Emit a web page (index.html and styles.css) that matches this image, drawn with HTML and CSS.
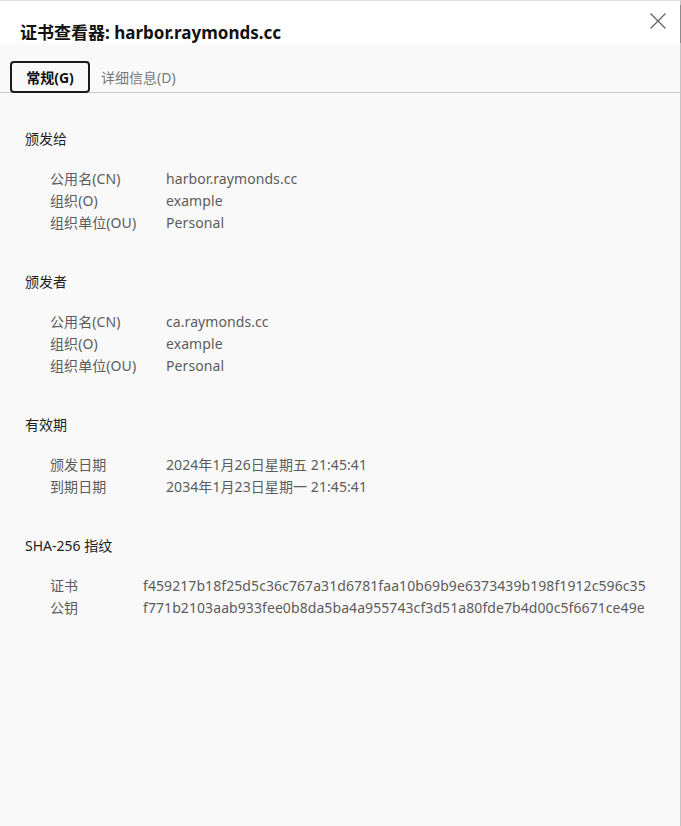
FILE: index.html
```html
<!DOCTYPE html>
<html lang="zh-CN">
<head>
  <meta charset="UTF-8">
  <meta name="viewport" content="width=device-width, initial-scale=1.0">
  <title>证书查看器</title>
  <link rel="stylesheet" href="styles.css">
</head>
<body>
  <div class="dialog">
    <div class="scroll-thumb"></div>

    <div class="header">
      <h1 class="title">证书查看器: harbor.raymonds.cc</h1>
      <button class="close-button" title="关闭">
        <svg width="16" height="16" viewBox="0 0 16 16">
          <path d="M0.5 0.5 L15.5 15.5 M15.5 0.5 L0.5 15.5" stroke="#5f5f5f" stroke-width="1.2" fill="none"/>
        </svg>
      </button>
    </div>

    <div class="tabs">
      <button class="tab active">常规(G)</button>
      <button class="tab">详细信息(D)</button>
    </div>

    <div class="content">
      <div class="section">
        <h2>颁发给</h2>
        <dl class="fields">
          <dt>公用名(CN)</dt><dd>harbor.raymonds.cc</dd>
          <dt>组织(O)</dt><dd>example</dd>
          <dt>组织单位(OU)</dt><dd>Personal</dd>
        </dl>
      </div>

      <div class="section">
        <h2>颁发者</h2>
        <dl class="fields">
          <dt>公用名(CN)</dt><dd>ca.raymonds.cc</dd>
          <dt>组织(O)</dt><dd>example</dd>
          <dt>组织单位(OU)</dt><dd>Personal</dd>
        </dl>
      </div>

      <div class="section">
        <h2>有效期</h2>
        <dl class="fields">
          <dt>颁发日期</dt><dd>2024年1月26日星期五 21:45:41</dd>
          <dt>到期日期</dt><dd>2034年1月23日星期一 21:45:41</dd>
        </dl>
      </div>

      <div class="section">
        <h2>SHA-256 指纹</h2>
        <dl class="fields narrow">
          <dt>证书</dt><dd>f459217b18f25d5c36c767a31d6781faa10b69b9e6373439b198f1912c596c35</dd>
          <dt>公钥</dt><dd>f771b2103aab933fee0b8da5ba4a955743cf3d51a80fde7b4d00c5f6671ce49e</dd>
        </dl>
      </div>
    </div>
  </div>
</body>
</html>
```

FILE: styles.css
```css
html, body {
  margin: 0;
  padding: 0;
  height: 100%;
}
body {
  font-family: "Noto Sans", "Noto Sans CJK SC", sans-serif;
  font-size: 14px;
  background: #f9f9f9;
}
.dialog {
  position: relative;
  width: 680px;
  min-height: 825px;
  border-top: 1px solid #dedede;
  border-right: 1px solid #c4c4c4;
  background: #f9f9f9;
}
.scroll-thumb {
  position: absolute;
  top: 4px;
  right: -1px;
  width: 1px;
  height: 38px;
  background: #8a8a8a;
}
.header {
  display: flex;
  justify-content: space-between;
  align-items: flex-start;
  height: 42px;
  background: #fff;
}
.title {
  margin: 0;
  padding: 20px 0 0 20px;
  font-size: 17px;
  line-height: 24px;
  font-weight: bold;
  color: #111;
}
.close-button {
  border: none;
  background: none;
  padding: 0;
  margin: 12px 14px 0 0;
  width: 16px;
  height: 16px;
  cursor: pointer;
}
.close-button svg {
  display: block;
}
.tabs {
  display: flex;
  align-items: flex-end;
  gap: 12px;
  height: 49px;
  padding-left: 10px;
  border-bottom: 1px solid #c8c8c8;
}
.tab {
  height: 32px;
  margin-bottom: -1px;
  padding: 0 12px;
  border: 2px solid transparent;
  border-radius: 4px;
  background: none;
  font-family: inherit;
  font-size: 14px;
  color: #777;
  cursor: pointer;
}
.tab.active {
  width: 80px;
  border-color: #1a1a1a;
  color: #111;
  font-weight: bold;
}
.tab + .tab {
  padding-left: 0;
  margin-left: -3px;
}
.content {
  padding: 35px 25px 0;
}
.section {
  margin-bottom: 37px;
}
.section h2 {
  margin: 0 0 18px;
  font-size: 14px;
  line-height: 22px;
  font-weight: normal;
  color: #1e1e1e;
}
.fields {
  display: grid;
  grid-template-columns: 116px auto;
  margin: 0;
  padding-left: 25px;
  line-height: 22px;
  letter-spacing: 0.08px;
  color: #5c5c5c;
}
.fields.narrow {
  grid-template-columns: 93px auto;
}
.fields dt,
.fields dd {
  margin: 0;
  white-space: nowrap;
}
```
